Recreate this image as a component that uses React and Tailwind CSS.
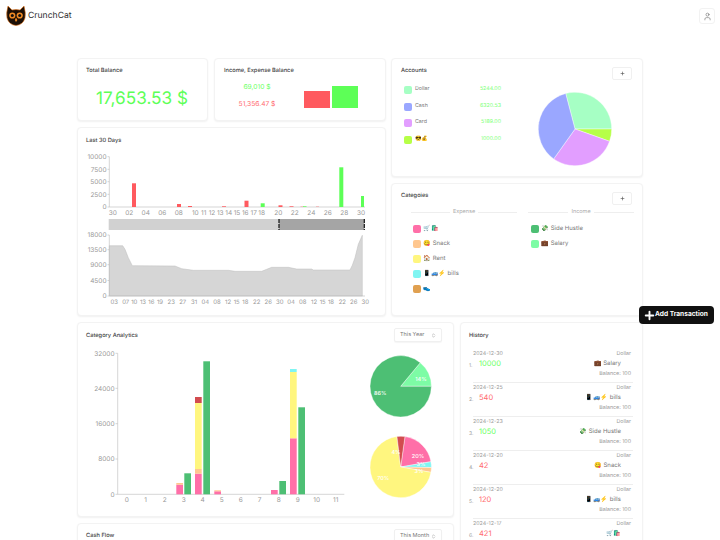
import { Plus, User, ChevronsUpDown } from 'lucide-react'

const RED = '#ff5a5f'
const GREEN = '#5dff57'
const C = {
  pink: '#ff6fa8',
  peach: '#ffc78f',
  yellow: '#fff67f',
  cyan: '#80f5f2',
  brown: '#e0a050',
  dark: '#4dbf74',
  mint: '#7dfca5',
  crimson: '#d24c4f',
}

const accounts = [
  { name: 'Dollar', color: '#a6ffc4', amount: '5244.00' },
  { name: 'Cash', color: '#9aa7ff', amount: '6320.53' },
  { name: 'Card', color: '#e29eff', amount: '5189.00' },
  { name: '😎💰', color: '#b6ff47', amount: '1000.00' },
]

const expenses = [
  { color: C.pink, label: '🛒🛍️' },
  { color: C.peach, label: '😋 Snack' },
  { color: C.yellow, label: '🏠 Rent' },
  { color: C.cyan, label: '📱🚙⚡ bills' },
  { color: C.brown, label: '👟' },
]

const incomes = [
  { color: C.dark, label: '💸 Side Hustle' },
  { color: C.mint, label: '💼 Salary' },
]

const history = [
  { date: '2024-12-30', amount: '10000', income: true, cat: '💼 Salary' },
  { date: '2024-12-25', amount: '540', cat: '📱🚙⚡ bills' },
  { date: '2024-12-23', amount: '1050', income: true, cat: '💸 Side Hustle' },
  { date: '2024-12-20', amount: '42', cat: '😋 Snack' },
  { date: '2024-12-20', amount: '120', cat: '📱🚙⚡ bills' },
  { date: '2024-12-17', amount: '421', cat: '🛒🛍️' },
]

// bars of the 30 day chart, in page pixels: x, width, top
const dayBars = [
  [132, 4, 182.3, RED], [177, 4, 203, RED], [188, 4, 205, RED], [222, 4, 205.3, RED],
  [244.5, 4, 199.7, RED], [260.7, 4, 202.3, GREEN], [278.5, 4, 204.3, RED], [289.5, 4, 205.3, RED],
  [300.5, 3, 205.7, RED], [303, 3.5, 205.3, GREEN], [316, 3, 205.7, RED], [333.5, 4, 206, RED],
  [339.3, 4, 166.3, GREEN], [361, 3, 195, GREEN],
]
const dayTicks = [
  ['30', 112.7], ['02', 129.3], ['04', 145.7], ['06', 162.3], ['08', 178.7], ['10', 195.3],
  ['11', 203.7], ['12', 212], ['13', 220.3], ['14', 228.7], ['15', 237], ['16', 245.3],
  ['17', 253.7], ['18', 261.7], ['20', 278.3], ['22', 294.7], ['24', 311.3], ['26', 327.7],
  ['28', 344.3], ['30', 361],
]

const balanceTicks = [
  ['03', 114.3], ['07', 125.7], ['10', 134.3], ['13', 143], ['16', 151.3], ['19', 160],
  ['23', 171.3], ['27', 182.7], ['31', 194], ['04', 205.3], ['08', 217], ['12', 228],
  ['15', 236.7], ['18', 245.3], ['22', 256.7], ['26', 268.3], ['30', 279.7], ['04', 291],
  ['08', 302.7], ['12', 314], ['15', 322.7], ['18', 331], ['22', 342.3], ['26', 353.7], ['30', 365.3],
]
const balancePoints =
  '109.3,295 109.3,244.7 122.7,244.7 125,248.3 128.3,256.7 132.3,264.7 175,265 181.7,267.7 193.3,269.3 228.3,269.3 235,270.3 261.7,270.3 266.7,268.3 271.7,266.3 288.3,266.3 296.7,268 311.7,268 313.3,269 350,269 352.3,264.3 355,256.7 358.3,243.3 362.3,234.3 362.3,295'

// stacked columns of the category chart: x, width, top, bottom, colour
const catBars = [
  [175.3, 6.7, 484.7, 494.3, C.pink], [175.3, 6.7, 483, 484.7, C.peach], [183.3, 6.7, 473.3, 494.3, C.dark],
  [194, 6.7, 473.7, 494.3, C.pink], [194, 6.7, 469, 473.7, C.peach], [194, 6.7, 403, 469, C.yellow],
  [194, 6.7, 397, 403, C.crimson], [202.3, 6.7, 361.3, 494.3, C.dark],
  [213.3, 6.7, 491.3, 494.3, C.pink], [213.3, 6.7, 490.3, 491.3, C.peach],
  [270, 6.7, 490, 494.3, C.pink], [278.3, 6.7, 481, 494.3, C.dark],
  [289, 6.7, 438.3, 494.3, C.pink], [289, 6.7, 372, 438.3, C.yellow], [289, 6.7, 369, 372, C.cyan],
  [297.3, 6.7, 407.3, 494.3, C.dark],
]

// pie slice, angles in degrees clockwise from north
function slice(cx, cy, r, from, to) {
  const p = (a) => {
    const t = (a * Math.PI) / 180
    return `${(cx + r * Math.sin(t)).toFixed(2)} ${(cy - r * Math.cos(t)).toFixed(2)}`
  }
  return `M${cx} ${cy}L${p(from)}A${r} ${r} 0 ${to - from > 180 ? 1 : 0} 1 ${p(to)}Z`
}

function Card({ className = '', children }) {
  return (
    <div className={`rounded-[4px] border border-[#f3f3f3] bg-white shadow-[0_1px_2px_rgba(0,0,0,0.06)] ${className}`}>
      {children}
    </div>
  )
}

function Title({ children }) {
  return <div className="text-[5.7px] leading-[8px] font-medium text-[#444]">{children}</div>
}

function AddButton() {
  return (
    <button type="button" className="flex h-[13px] w-[20px] items-center justify-center rounded-[2px] border border-[#f0f0f0] bg-white text-[#555]">
      <Plus size={5} strokeWidth={3} />
    </button>
  )
}

function Select({ label }) {
  return (
    <div className="flex h-[14px] w-[48px] items-center justify-between rounded-[2px] border border-[#f0f0f0] bg-white pr-[5px] pl-[5px] text-[5.5px] text-[#777] shadow-[0_1px_1px_rgba(0,0,0,0.04)]">
      {label}
      <ChevronsUpDown size={5} />
    </div>
  )
}

function Swatch({ color, size = 'h-[8px] w-[8px]' }) {
  return <span className={`${size} shrink-0 rounded-[2px]`} style={{ backgroundColor: color }} />
}

function Divider({ label }) {
  return (
    <div className="flex items-center gap-[3px] text-[5.5px] text-[#aaa]">
      <span className="h-px flex-1 bg-[#eee]" />
      {label}
      <span className="h-px flex-1 bg-[#eee]" />
    </div>
  )
}

function CatRow({ item }) {
  return (
    <div className="flex h-[15px] items-center gap-[3px] text-[6px] text-[#777]">
      <Swatch color={item.color} size="h-[7.5px] w-[7.5px]" />
      {item.label}
    </div>
  )
}

function Logo() {
  return (
    <svg width="20" height="21" viewBox="0 0 20 21">
      <path d="M2 1 L6 5 Q10 4 14 5 L18 1 Q20 8 19 13 Q17 20 10 20.5 Q3 20 1 13 Q0 8 2 1Z" fill="#1c0f06" stroke="#e8751a" strokeWidth="0.6" />
      <circle cx="6.3" cy="10.5" r="3.1" fill="#f08a24" />
      <circle cx="13.7" cy="10.5" r="3.1" fill="#f08a24" />
      <circle cx="6.3" cy="10.5" r="1.5" fill="#111" />
      <circle cx="13.7" cy="10.5" r="1.5" fill="#111" />
      <path d="M10 12.5 L11.4 15 L10 17 L8.9 15Z" fill="#f08a24" />
    </svg>
  )
}

function AccountsPie() {
  return (
    <svg width="76" height="76" viewBox="537 92 76 76" className="block">
      <path d={slice(575, 130, 36.7, -14.7, 90)} fill="#a6ffc4" stroke="#fff" strokeWidth="0.4" />
      <path d={slice(575, 130, 36.7, 90, 109.6)} fill="#b6ff47" stroke="#fff" strokeWidth="0.4" />
      <path d={slice(575, 130, 36.7, 109.6, 215.5)} fill="#e29eff" stroke="#fff" strokeWidth="0.4" />
      <path d={slice(575, 130, 36.7, 215.5, 345.3)} fill="#9aa7ff" stroke="#fff" strokeWidth="0.4" />
    </svg>
  )
}

function DaysChart() {
  return (
    <svg width="307" height="166" viewBox="78 148 307 166" className="block font-['Inter',sans-serif]">
      <g fontSize="6.5" fill="#999" textAnchor="end">
        {[['10000', 155.7], ['7500', 168.3], ['5000', 180.7], ['2500', 193.3], ['0', 206]].map(([t, y]) => (
          <g key={t}>
            <text x="106.5" y={y + 2.2}>{t}</text>
            <line x1="107.5" x2="109.3" y1={y} y2={y} stroke="#aaa" strokeWidth="0.5" />
          </g>
        ))}
      </g>
      <path d="M109.3 155.7V206H365" fill="none" stroke="#bbb" strokeWidth="0.6" />
      {dayBars.map(([x, w, top, fill], i) => (
        <rect key={i} x={x} y={top} width={w} height={206 - top} fill={fill} />
      ))}
      <g fontSize="6.5" fill="#999" textAnchor="middle">
        {dayTicks.map(([t, x], i) => (
          <text key={i} x={x} y="213.5">{t}</text>
        ))}
      </g>

      <rect x="108.7" y="218" width="170.3" height="11" fill="#d1d1d1" />
      <rect x="279" y="218" width="85.3" height="11" fill="#a5a5a5" />
      <path d="M279 218V229M364.3 218V229" stroke="#111" strokeWidth="1.2" strokeDasharray="4 1" />

      <g fontSize="6.5" fill="#999" textAnchor="end">
        {[['18000', 234], ['13500', 248.7], ['9000', 263.7], ['4500', 279.5], ['0', 295]].map(([t, y]) => (
          <g key={t}>
            <text x="106.5" y={y + 2.2}>{t}</text>
            <line x1="107.5" x2="109.3" y1={y} y2={y} stroke="#aaa" strokeWidth="0.5" />
          </g>
        ))}
      </g>
      <polygon points={balancePoints} fill="#d6d6d6" stroke="#bdbdbd" strokeWidth="0.5" />
      <path d="M109.3 234V295H365" fill="none" stroke="#bbb" strokeWidth="0.6" />
      <g fontSize="6" fill="#999" textAnchor="middle">
        {balanceTicks.map(([t, x], i) => (
          <text key={i} x={x} y="303">{t}</text>
        ))}
      </g>
    </svg>
  )
}

function CategoryChart() {
  return (
    <svg width="272" height="163" viewBox="80 345 272 163" className="block font-['Inter',sans-serif]">
      <g fontSize="6.5" fill="#999" textAnchor="end">
        {[['32000', 353.3], ['24000', 388.3], ['16000', 423.7], ['8000', 459], ['0', 494.3]].map(([t, y]) => (
          <g key={t}>
            <text x="113.5" y={y + 2.2}>{t}</text>
            <line x1="114.5" x2="116.7" y1={y} y2={y} stroke="#aaa" strokeWidth="0.5" />
          </g>
        ))}
      </g>
      <path d="M116.7 353.3V494.3H343.3" fill="none" stroke="#bbb" strokeWidth="0.6" />
      {catBars.map(([x, w, top, bottom, fill], i) => (
        <rect key={i} x={x} y={top} width={w} height={bottom - top} fill={fill} />
      ))}
      <g fontSize="6.5" fill="#999" textAnchor="middle">
        {[0, 1, 2, 3, 4, 5, 6, 7, 8, 9, 10, 11].map((n) => (
          <text key={n} x={125.7 + n * 19} y="501.7">{n}</text>
        ))}
      </g>
    </svg>
  )
}

function CategoryPies() {
  const line = { stroke: '#fff', strokeWidth: 0.4 }
  return (
    <svg width="66" height="150" viewBox="367 352 66 150" className="block font-['Inter',sans-serif]">
      <path d={slice(399.7, 386.3, 30.7, 39.6, 90)} fill={C.mint} {...line} />
      <path d={slice(399.7, 386.3, 30.7, 90, 399.6)} fill={C.dark} {...line} />
      <g fontSize="5.5" fontWeight="500" fill="#fff" textAnchor="middle">
        <text x="420" y="381.3">14%</text>
        <text x="379.3" y="395">86%</text>
      </g>
      <path d={slice(399.7, 467, 30.7, 8, 80)} fill={C.pink} {...line} />
      <path d={slice(399.7, 467, 30.7, 80, 91)} fill={C.cyan} {...line} />
      <path d={slice(399.7, 467, 30.7, 91, 100)} fill={C.peach} {...line} />
      <path d={slice(399.7, 467, 30.7, 100, 353)} fill={C.yellow} {...line} />
      <path d={slice(399.7, 467, 30.7, 353, 368)} fill={C.crimson} {...line} />
      <g fontSize="5.5" fontWeight="500" fill="#fff" textAnchor="middle">
        <text x="417" y="458">20%</text>
        <text x="395" y="454">4%</text>
        <text x="382.3" y="480.3">70%</text>
        <text x="420" y="466">3%</text>
        <text x="418" y="473">3%</text>
      </g>
    </svg>
  )
}

function HistoryRow({ row, index, last }) {
  return (
    <div className="flex h-[34px] items-center gap-[1px]">
      <span className="w-[3px] shrink-0 pt-[2px] text-[5px] text-[#999]">{index}.</span>
      <div className={`flex h-full flex-1 flex-col pt-[2px] ${last ? '' : 'border-b border-[#eeeeee]'}`}>
        <div className="flex justify-between pr-[2px] text-[5.3px] leading-[7px] text-[#999]">
          <span>{row.date}</span>
          <span>Dollar</span>
        </div>
        <div className="flex items-center justify-between pr-[12px] pl-[6px] leading-[12px]">
          <span className={`text-[7.5px] ${row.income ? 'text-[#6dff66]' : 'text-[#ff6b6f]'}`}>{row.amount}</span>
          <span className="text-[6px] text-[#777]">{row.cat}</span>
        </div>
        <div className="mt-[1px] pr-[2px] text-right text-[5.3px] leading-[7px] text-[#999]">Balance: 100</div>
      </div>
    </div>
  )
}

export default function App() {
  return (
    <div className="relative h-[540px] w-[720px] overflow-hidden bg-white font-['Inter','Noto_Sans',sans-serif] [text-rendering:geometricPrecision]">
      <header className="flex h-[58px] items-start justify-between pt-[5px] pr-[5px] pl-[6px]">
        <div className="flex items-center gap-[2px]">
          <Logo />
          <span className="text-[8.6px] leading-[20px] text-[#333]">CrunchCat</span>
        </div>
        <div className="mt-[3px] flex h-[16px] w-[16px] items-center justify-center rounded-[3px] border border-[#f2f2f2] text-[#666]">
          <User size={9} strokeWidth={1.5} />
        </div>
      </header>

      <main className="grid grid-cols-[377px_183px] gap-[6px] pl-[77px]">
        <div className="col-span-2 grid grid-cols-[309px_252px] gap-[5px]">
          <div className="flex flex-col gap-[6px]">
            <div className="grid grid-cols-[131px_172px] gap-[6px]">
              <Card className="h-[63px] pt-[8px] pl-[8px] pr-[9px]">
                <Title>Total Balance</Title>
                <div className="mt-[12px] text-center text-[17.2px] leading-[24px] text-[#5dff57]">17,653.53 $</div>
              </Card>
              <Card className="relative h-[63px] px-[9px] pt-[8px]">
                <Title>Income, Expense Balance</Title>
                <div className="mt-[8px] flex items-end">
                  <div className="flex w-[66px] flex-col items-center gap-[9px] text-[6.7px] leading-[8px]">
                    <span className="text-[#6dff66]">69,010 $</span>
                    <span className="text-[#ff6b6f]">51,356.47 $</span>
                  </div>
                  <div className="ml-[14px] flex items-end gap-[2px]">
                    <div className="h-[17px] w-[26px] bg-[#ff5a5f]" />
                    <div className="h-[22px] w-[26px] bg-[#5dff57]" />
                  </div>
                </div>
              </Card>
            </div>
            <Card className="h-[189px] pt-[9px] pl-[8px]">
              <Title>Last 30 Days</Title>
              <div className="-ml-[8px] mt-[4px]">
                <DaysChart />
              </div>
            </Card>
          </div>

          <div className="flex flex-col gap-[6px]">
            <Card className="relative h-[119px] pt-[8px] pr-[10px] pl-[9px]">
              <div className="flex items-start justify-between">
                <Title>Accounts</Title>
                <AddButton />
              </div>
              <div className="flex items-start">
                <div className="mt-[2px] flex w-[100px] flex-col">
                  {accounts.map((a) => (
                    <div key={a.name} className="flex h-[16.5px] items-center pl-[3px] text-[5.3px] text-[#777]">
                      <Swatch color={a.color} />
                      <span className="ml-[3px] flex-1">{a.name}</span>
                      <span className="text-[#7dff78]">{a.amount}</span>
                    </div>
                  ))}
                </div>
                <div className="ml-[36px] mt-[11px]">
                  <AccountsPie />
                </div>
              </div>
            </Card>
            <Card className="h-[133px] pt-[8px] pr-[10px] pl-[9px]">
              <div className="flex items-start justify-between">
                <Title>Categoies</Title>
                <AddButton />
              </div>
              <div className="mt-[3px] grid grid-cols-[106px_106px] gap-[11px] pl-[10px]">
                <Divider label="Expense" />
                <Divider label="Income" />
              </div>
              <div className="mt-[5px] grid grid-cols-[118px_100px] pl-[12px]">
                <div>
                  {expenses.map((c) => (
                    <CatRow key={c.label} item={c} />
                  ))}
                </div>
                <div>
                  {incomes.map((c) => (
                    <CatRow key={c.label} item={c} />
                  ))}
                </div>
              </div>
            </Card>
          </div>
        </div>

        <div className="flex flex-col gap-[6px]">
          <Card className="h-[195px] pt-[8px] pr-[11px] pl-[8px]">
            <div className="flex h-[14px] items-start justify-between">
              <div className="pt-[1px]">
                <Title>Category Analytics</Title>
              </div>
              <div className="-mt-[3px]">
                <Select label="This Year" />
              </div>
            </div>
            <div className="-ml-[5px] flex items-start">
              <CategoryChart />
              <div className="ml-[15px] mt-[7px]">
                <CategoryPies />
              </div>
            </div>
          </Card>
          <Card className="h-[60px] pt-[8px] pr-[11px] pl-[8px]">
            <div className="flex items-start justify-between">
              <Title>Cash Flow</Title>
              <div className="-mt-[3px]">
                <Select label="This Month" />
              </div>
            </div>
          </Card>
        </div>

        <Card className="h-[260px] pt-[9px] pr-[9px] pl-[8px]">
          <Title>History</Title>
          <div className="mt-[9px]">
            {history.map((row, i) => (
              <HistoryRow key={i} row={row} index={i + 1} last={i === history.length - 1} />
            ))}
          </div>
        </Card>
      </main>

      <button type="button" className="absolute top-[306px] left-[639px] flex h-[18px] w-[75px] items-center rounded-[4px] bg-[#111] pl-[4px] text-[6.6px] font-bold whitespace-nowrap text-white">
        <Plus size={13} strokeWidth={3.5} />
        <span className="-ml-[1px]">Add Transaction</span>
      </button>
    </div>
  )
}
